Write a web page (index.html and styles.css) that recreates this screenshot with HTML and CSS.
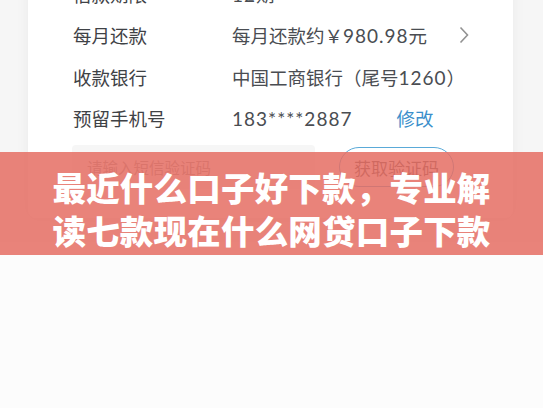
FILE: index.html
```html
<!DOCTYPE html>
<html lang="zh-CN">
<head>
  <meta charset="UTF-8">
  <title>最近什么口子好下款</title>
  <meta name="viewport" content="width=device-width, initial-scale=1.0">
  <link rel="stylesheet" href="styles.css">
</head>
<body>
  <div class="page">
    <div class="card">
      <div class="row">
        <span class="label">借款期限</span>
        <span class="value"><span class="num">12</span>期</span>
      </div>
      <div class="row">
        <span class="label">每月还款</span>
        <span class="value">每月还款约￥<span class="num">980.98</span>元</span>
        <svg class="chevron" width="12" height="20" viewBox="0 0 12 20">
          <path d="M2.5 2.5 L9.5 10 L2.5 17.5" fill="none" stroke="#929292" stroke-width="1.6"/>
        </svg>
      </div>
      <div class="row">
        <span class="label">收款银行</span>
        <span class="value">中国工商银行（尾号<span class="num">1260</span>）</span>
      </div>
      <div class="row">
        <span class="label">预留手机号</span>
        <span class="value"><span class="num">183****2887</span><a href="#" class="edit">修改</a></span>
      </div>
      <div class="code-row">
        <input type="text" class="code-input" placeholder="请输入短信验证码">
        <button class="code-btn">获取验证码</button>
      </div>
    </div>
  </div>

  <div class="banner">
    <h1>最近什么口子好下款，专业解<br>读七款现在什么网贷口子下款</h1>
  </div>
</body>
</html>
```

FILE: styles.css
```css
body {
  margin: 0;
  font-family: "Noto Sans CJK SC", "Noto Sans", sans-serif;
  background: #fcfcfc;
  height: 408px;
  overflow: hidden;
}

.page {
  background: #f6f6f6;
  padding: 0 30px 24px 28px;
}

.card {
  margin-top: -27px;
  padding: 0 43px 29px 45px;
  background: #fff;
  border-radius: 0 0 8px 8px;
  box-shadow: 0 0 14px rgba(0,0,0,0.05);
}

.row {
  display: grid;
  grid-template-columns: 159px 1fr 12px;
  align-items: center;
  height: 41.5px;
  font-size: 18.5px;
}

.label {
  color: #3f4246;
}

.value {
  color: #4a4d52;
  white-space: nowrap;
}

.num {
  font-family: Lato, sans-serif;
  font-size: 19px;
  letter-spacing: 1px;
}

.chevron {
  display: block;
}

.edit {
  margin-left: 44px;
  color: #3b8fcb;
  text-decoration: none;
  letter-spacing: 0;
}

.code-row {
  display: flex;
  align-items: center;
  margin-top: 6px;
  height: 44px;
}

.code-input {
  width: 243px;
  height: 44px;
  box-sizing: border-box;
  margin-left: -1px;
  padding: 0 15px;
  border: none;
  border-radius: 4px;
  background: #f6f6f6;
  font-family: inherit;
  font-size: 15.5px;
  color: #333;
}

.code-input::placeholder {
  color: #9a9a9a;
}

.code-btn {
  margin-left: 24px;
  width: 115px;
  height: 40px;
  border: 1.5px solid #5aaad8;
  border-radius: 20px;
  background: #fff;
  font-family: inherit;
  font-size: 17px;
  color: #555;
}

.banner {
  position: absolute;
  left: 0;
  right: 0;
  top: 152px;
  height: 103px;
  box-sizing: border-box;
  padding-top: 13px;
  background: rgba(229,109,99,0.85);
  text-align: center;
}

.banner h1 {
  margin: 0;
  font-size: 33.5px;
  line-height: 43px;
  font-weight: 900;
  color: #fff;
  letter-spacing: 0.2px;
}
```
